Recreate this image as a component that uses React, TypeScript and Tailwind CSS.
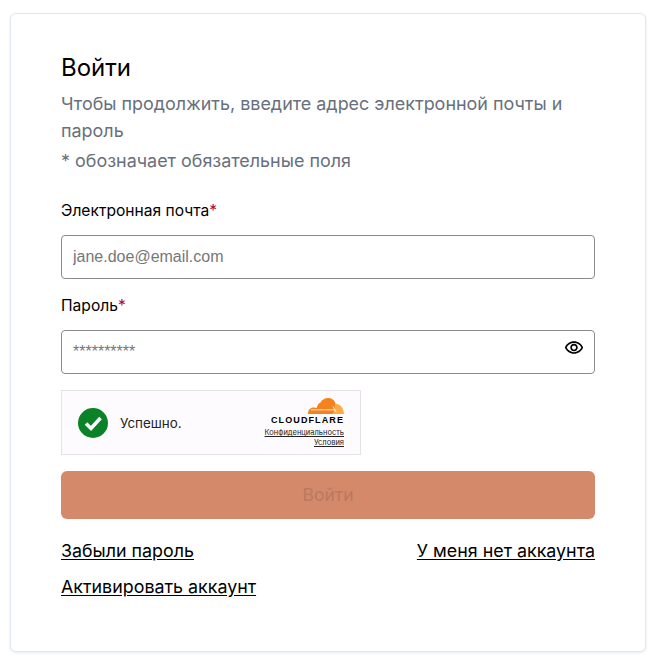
import { MdOutlineVisibility } from "react-icons/md";

function CloudflareLogo() {
  return (
    <svg width="36" height="16" viewBox="0 0 36 16" aria-hidden="true">
      <path
        d="M0 16 C0 12 2 9.5 6 9.5 C7 9.5 8 9.7 8.6 10 C9.5 6.5 11 5 12.5 4.5 C14 1.5 17 0 20 0 C24 0 27 2.5 27.5 6 L27 11 L25.5 16 Z"
        fill="#f6821f"
      />
      <path
        d="M27 5.5 C31.5 5.5 35.5 9 36 16 L25 16 L26.5 11 C27 9 27 7 27 5.5 Z"
        fill="#fbad41"
      />
      <path d="M3 11.8 L27 11.8" stroke="#ffffff" strokeWidth="0.8" />
      <path d="M25 8.5 L28 14" stroke="#ffffff" strokeWidth="0.8" />
    </svg>
  );
}

function TurnstileBox() {
  return (
    <div className="flex h-[65px] w-[300px] items-center justify-between border border-[#e4e2e7] bg-[#fefbfe] pr-[16px] pl-[16px]">
      <div className="flex items-center gap-[12px]">
        <svg width="30" height="30" viewBox="0 0 30 30" aria-hidden="true">
          <circle cx="15" cy="15" r="15" fill="#0b8227" />
          <path
            d="M8 15.5 L13 20.5 L22.5 10"
            fill="none"
            stroke="#ffffff"
            strokeWidth="3.6"
          />
        </svg>
        <span className="pt-[2px] text-[13.4px] text-[#232323]">Успешно.</span>
      </div>
      <div className="flex flex-col items-end pt-[1px]">
        <CloudflareLogo />
        <span className="mt-[1px] text-[9px] leading-[11px] font-black tracking-[1.1px] text-black [font-family:'Liberation_Sans',sans-serif]">
          CLOUDFLARE
        </span>
        <a className="mt-[2px] text-[7.5px] leading-[10px] text-[#232323] underline">
          Конфиденциальность
        </a>
        <a className="text-[7.5px] leading-[10px] text-[#232323] underline">
          Условия
        </a>
      </div>
    </div>
  );
}

export default function App() {
  return (
    <div className="min-h-[664px] bg-white pt-[13px] pr-[15px] pb-[11px] pl-[10px] [font-family:Inter,sans-serif]">
      <div className="rounded-[6px] border border-[#e1e7f0] bg-white px-[50px] pt-[38px] pb-[52px] shadow-[0_1px_3px_rgba(180,195,225,0.35)]">
        <h1 className="text-[24px] leading-[32px] font-normal text-black">
          Войти
        </h1>
        <p className="mt-[6px] text-[17.96px] leading-[27px] text-[#68707d]">
          Чтобы продолжить, введите адрес электронной почты и пароль
        </p>
        <p className="mt-[3px] text-[17.96px] leading-[27px] text-[#68707d]">
          * обозначает обязательные поля
        </p>

        <label className="mt-[26px] block text-[15.6px] leading-[22px] text-black">
          Электронная почта<span className="text-[#b0003a]">*</span>
        </label>
        <input
          placeholder="jane.doe@email.com"
          className="mt-[13px] block h-[44px] w-full rounded-[4px] border border-[#8a8a8a] px-[11px] text-[16px] [font-family:'Liberation_Sans',sans-serif] placeholder:text-[#777777]"
        />

        <label className="mt-[16px] block text-[15.6px] leading-[22px] text-black">
          Пароль<span className="text-[#b0003a]">*</span>
        </label>
        <div className="relative mt-[13px]">
          <input
            placeholder="**********"
            className="block h-[44px] w-full rounded-[4px] border border-[#8a8a8a] px-[11px] text-[16px] [font-family:'Liberation_Sans',sans-serif] placeholder:text-[#777777]"
          />
          <MdOutlineVisibility
            size={20}
            className="absolute top-[8px] right-[11px] text-black"
          />
        </div>

        <div className="mt-[16px]">
          <TurnstileBox />
        </div>

        <button className="mt-[16px] block h-[48px] w-full rounded-[6px] bg-[#d4896b] text-[17.5px] text-[#b97a60]">
          Войти
        </button>

        <div className="mt-[20px] flex justify-between text-[17.85px] leading-[24px] text-black">
          <a className="underline underline-offset-2">Забыли пароль</a>
          <a className="underline underline-offset-2">У меня нет аккаунта</a>
        </div>
        <div className="mt-[12px] text-[17.85px] leading-[24px] text-black">
          <a className="underline underline-offset-2">Активировать аккаунт</a>
        </div>
      </div>
    </div>
  );
}
